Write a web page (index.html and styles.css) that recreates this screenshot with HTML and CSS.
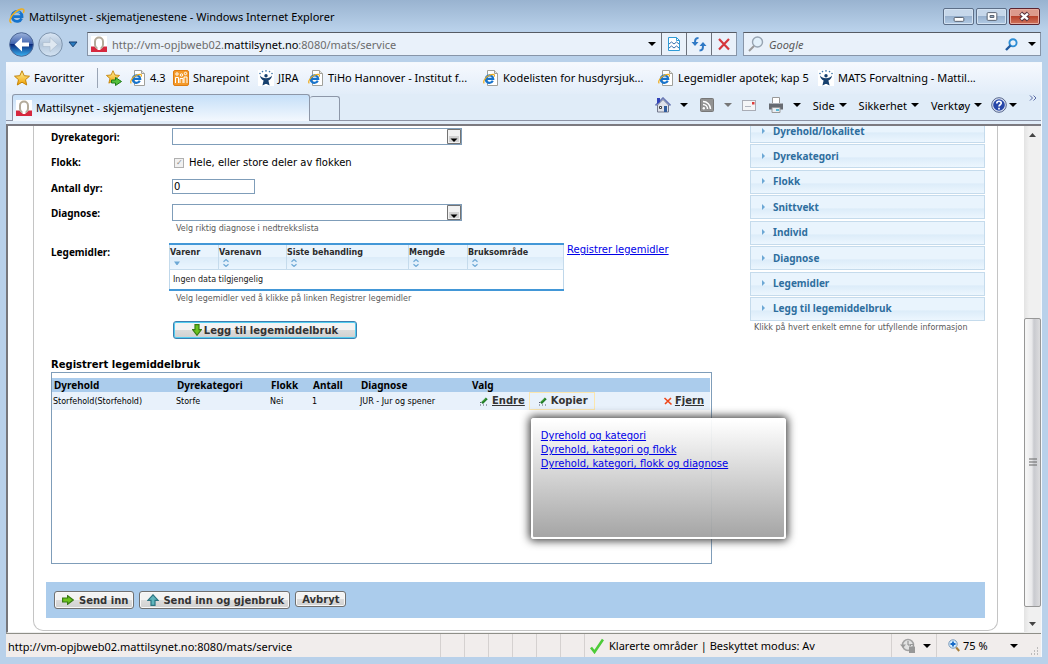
FILE: index.html
```html
<!DOCTYPE html>
<html lang="no">
<head>
<meta charset="utf-8">
<title>Mattilsynet - skjematjenestene</title>
<link rel="stylesheet" href="styles.css">
</head>
<body>
<svg class="sprite" aria-hidden="true">
  <defs>
    <linearGradient id="gold" x1="0" y1="0" x2="0" y2="1"><stop offset="0" stop-color="#fff3a0"/><stop offset="1" stop-color="#f0a000"/></linearGradient>
    <linearGradient id="navy" x1="0" y1="0" x2="0" y2="1"><stop offset="0" stop-color="#9db4dc"/><stop offset=".48" stop-color="#3f62ae"/><stop offset=".5" stop-color="#0c2a7c"/><stop offset="1" stop-color="#38b4f4"/></linearGradient>
    <linearGradient id="pale" x1="0" y1="0" x2="0" y2="1"><stop offset="0" stop-color="#dbe7f4"/><stop offset=".5" stop-color="#b3c6db"/><stop offset="1" stop-color="#d5e4f3"/></linearGradient>
  </defs>
  <symbol id="ie" viewBox="0 0 16 16">
    <path d="M12.6 10.4A5 5 0 1 1 13 8.600H4.600" fill="none" stroke="#1673cc" stroke-width="2.800"/>
    <path d="M4.500 6.500a4.500 4.500 0 0 1 6.500-2" fill="none" stroke="#62c0f5" stroke-width="1.200"/>
    <path d="M2.500 14.800C-.8 14 1.500 8 6 4.300S15.500-.5 14.900 3.200c-.1.700-.4 1.300-.7 1.800" fill="none" stroke="#efae1d" stroke-width="1.500"/>
  </symbol>
  <symbol id="page" viewBox="0 0 16 16">
    <path d="M4.500.5h7l3 3v12h-10z" fill="#fff" stroke="#a0a09a"/><path d="M11.500.5v3h3" fill="#e4e4e0" stroke="#a0a09a"/>
    <path d="M9.800 10.800A3.700 3.700 0 1 1 10.200 8.800H3.500" fill="none" stroke="#1673cc" stroke-width="2.200"/>
    <path d="M1.300 13.400C-.4 12 2 7 6.500 5.200s5.700-.7 4.500 1.500" fill="none" stroke="#f0ad1d" stroke-width="1.200"/>
  </symbol>
  <symbol id="mt" viewBox="0 0 16 16">
    <path d="M0 0h16v16H0z" fill="#fff"/><path d="M0 10.500h3.500L6 13h4l2.500-2.500H16V16H0z" fill="#d6283e"/>
    <rect x="4" y="1.500" width="8" height="11" rx="4" fill="#fff" stroke="#b3aa9a" stroke-width="2"/>
    <path d="M6.500 11h3v3h-3z" fill="#fff"/>
  </symbol>
  <symbol id="star" viewBox="0 0 16 16"><path d="M8 .8l2.200 4.900 5.300.5-4 3.500 1.200 5.300L8 12.200 3.300 15l1.200-5.300-4-3.500 5.300-.5z" fill="url(#gold)" stroke="#c48409"/></symbol>
  <symbol id="jira" viewBox="0 0 16 16">
    <path d="M0 0h16v16H0z" fill="#fff"/><circle cx="8" cy="5.800" r="1.700" fill="#17406e"/>
    <path d="M2 5.500c1.500 2 3.200 2.700 6 2.700s4.500-.7 6-2.700c-.2 2.500-1.600 4-3.600 5l1.200 5-3-1.500H7.400l-3 1.500 1.200-5C3.600 9.500 2.200 8 2 5.500z" fill="#17406e"/>
    <g fill="#3973a8"><circle cx="2" cy="3.500" r=".8"/><circle cx="4.500" cy="1.600" r=".8"/><circle cx="8" cy=".9" r=".8"/><circle cx="11.500" cy="1.600" r=".8"/><circle cx="14" cy="3.500" r=".8"/></g>
  </symbol>
  <symbol id="caret" viewBox="0 0 8 4"><path d="M0 0h8L4 4z" fill="currentColor"/></symbol>
  <symbol id="pencil" viewBox="0 0 10 10"><path d="M3 7.200 7.800 2.400" stroke="#1f7a26" stroke-width="2.600"/><path d="M3.500 5.800 6.800 2.500" stroke="#62c24a" stroke-width=".8"/><path d="M1 6.500h1M1 9h1M4 9h1M7 9h1" stroke="#51566a"/></symbol>
  <symbol id="sort" viewBox="0 0 6 8"><path d="M.5 2.800 3 .6l2.500 2.200M.5 5.200 3 7.400l2.500-2.200" fill="none" stroke="#6da8d5" stroke-width="1.200"/></symbol>
  <symbol id="combo-btn" viewBox="0 0 14 15"><path d="M.5.5h13v14H.5z" fill="#f2f2f2" stroke="#737373"/><path d="M2 7h10v6H2z" fill="#d2d2d2"/><path d="M3.500 9.500h7L7 13z"/></symbol>
  <symbol id="arrow" viewBox="0 0 12 10"><path d="M.6 3h5V.7L11.300 5 5.600 9.300V7h-5z" fill="#6cc41d" stroke="#397b14" stroke-width="1.200"/></symbol>
</svg>

<div class="window">
  <header class="titlebar">
    <svg class="i16"><use href="#ie"/></svg>
    <span class="title">Mattilsynet - skjematjenestene - Windows Internet Explorer</span>
    <div class="window-buttons">
      <button class="winbtn" aria-label="Minimer"><svg viewBox="0 0 30 15"><rect x="10.500" y="8.500" width="10" height="4" rx="1" fill="#fff" stroke="#555d6b"/></svg></button>
      <button class="winbtn" aria-label="Maksimer"><svg viewBox="0 0 30 15"><rect x="10.500" y="3.500" width="10" height="8" rx="1" fill="#fff" stroke="#555d6b"/><path d="M13.500 6.500h4v2h-4z" fill="#9db3cc" stroke="#555d6b"/></svg></button>
      <button class="winbtn close" aria-label="Lukk"><svg viewBox="0 0 30 15"><path d="m11 4 8 7M19 4l-8 7" stroke="#56303a" stroke-width="4.500"/><path d="m11.500 4.500 7 6M18.500 4.500l-7 6" stroke="#fff" stroke-width="2.400"/></svg></button>
    </div>
  </header>

  <div class="navbar">
    <div class="history">
      <button aria-label="Tilbake"><svg viewBox="0 0 25 25"><circle cx="12.500" cy="12.500" r="11.800" fill="url(#navy)" stroke="#4c6795"/><path d="M13 5.500 5.500 12.500l7.500 7v-5h7v-4h-7z" fill="#fff"/></svg></button>
      <button aria-label="Fram"><svg viewBox="0 0 25 25"><circle cx="12.500" cy="12.500" r="11.800" fill="url(#pale)" stroke="#7e94ad"/><path d="m12 5.500 7.500 7-7.500 7v-5H5v-4h7z" fill="#dfe8f1" stroke="#a9b9ca" stroke-width=".6"/></svg></button>
      <button class="recent" aria-label="Nylige sider"><svg viewBox="0 0 10 7"><path d="M1 1h8L5 5.800z" fill="#2a7cc0" stroke="#173f70"/></svg></button>
    </div>
    <div class="address">
      <svg class="i16"><use href="#mt"/></svg>
      <span class="url">http://vm-opjbweb02.<b>mattilsynet.no</b>:8080/mats/service</span>
      <svg class="caret"><use href="#caret"/></svg>
      <button aria-label="Kompatibilitet"><svg viewBox="0 0 16 16"><path d="M2.500 1.500h8l3 3v10h-11z" fill="#fff" stroke="#2e9bd6"/><path d="M10.500 1.500v3h3" fill="none" stroke="#2e9bd6"/><path d="m3 8 2.500-2L8 8l2.500-2L13 8M3 12l2.500-2L8 12l2.500-2 2.500 2" fill="none" stroke="#3572b0"/></svg></button>
      <button aria-label="Oppdater"><svg viewBox="0 0 16 16"><path d="M7.500 2C4 2 4 4 4 8" fill="none" stroke="#2f79c5" stroke-width="2"/><path d="M.5 6h7L4 10zM8.500 10h7L12 6z" fill="#2f79c5"/><path d="M8.500 14.500c3.500 0 3.500-2 3.500-6" fill="none" stroke="#2f79c5" stroke-width="2"/></svg></button>
      <button aria-label="Stopp"><svg viewBox="0 0 16 16"><path d="m3 3 10 10.500M13 3 3 13.500" stroke="#d5363c" stroke-width="2.200"/></svg></button>
    </div>
    <div class="search">
      <svg class="i16" viewBox="0 0 16 16"><circle cx="9.500" cy="6" r="5" fill="#e3f1fb" stroke="#97a4b2" stroke-width="1.400"/><path d="m6 10-5 5" stroke="#9a9a9a" stroke-width="2"/></svg>
      <input type="text" placeholder="Google" aria-label="Google">
      <svg class="go" viewBox="0 0 13 13"><circle cx="8" cy="4.800" r="3.600" fill="none" stroke="#2d8ed5" stroke-width="1.900"/><path d="M5.500 7.500 1 12" stroke="#205a9f" stroke-width="2.400"/></svg>
      <svg class="caret"><use href="#caret"/></svg>
    </div>
  </div>

  <div class="frame">
    <nav class="favorites">
      <button class="fav first"><svg class="i16"><use href="#star"/></svg>Favoritter</button>
      <button class="fav" aria-label="Legg til"><svg class="i16" viewBox="0 0 16 16"><use href="#star" width="14" height="14"/><path d="M5.500 10h4V7.500l6 4-6 4V13h-4z" fill="#54c13b" stroke="#1f7a1a"/></svg></button>
      <a class="fav" href="#"><svg class="i16"><use href="#page"/></svg>4.3</a>
      <a class="fav" href="#"><svg class="i16" viewBox="0 0 16 16"><rect x=".5" y=".5" width="15" height="15" rx="1.500" fill="#f39a2b" stroke="#e07d10"/><g fill="none" stroke="#fff"><circle cx="4" cy="4" r="1.200"/><circle cx="8.500" cy="5" r="1.200"/><circle cx="12.500" cy="3.500" r="1.200"/><path d="M2.500 13V7.500h3V13M7 13V8.500h3V13M11 13V7h3v6"/></g></svg>Sharepoint</a>
      <a class="fav" href="#"><svg class="i16"><use href="#jira"/></svg>JIRA</a>
      <a class="fav" href="#"><svg class="i16"><use href="#page"/></svg>TiHo Hannover - Institut f...</a>
      <a class="fav" href="#"><svg class="i16"><use href="#page"/></svg>Kodelisten for husdyrsjuk...</a>
      <a class="fav" href="#"><svg class="i16"><use href="#page"/></svg>Legemidler apotek; kap 5</a>
      <a class="fav" href="#"><svg class="i16"><use href="#jira"/></svg>MATS Forvaltning - Mattil...</a>
    </nav>

    <div class="tabrow">
      <div class="tab"><svg class="i16"><use href="#mt"/></svg>Mattilsynet - skjematjenestene</div>
      <button class="newtab" aria-label="Ny fane"></button>
      <div class="commands">
        <button class="cmd" aria-label="Hjem"><svg class="i16" viewBox="0 0 16 16"><path d="M2.500 8 8 2.500 13.500 8v7h-11z" fill="#dfe2ea" stroke="#72788c"/><path d="M.5 8.500 8 1l7.500 7.500" fill="none" stroke="#6b79b5" stroke-width="1.600"/><path d="M2 1h3v4L2 7z" fill="#3142b8"/><path d="M9 9h3v6H9z" fill="#315c9d"/><path d="M4.500 9.500h2v2h-2z" fill="#fff" stroke="#444"/></svg><svg class="caret"><use href="#caret"/></svg></button>
        <button class="cmd feed" aria-label="Feeder"><svg class="i14" viewBox="0 0 14 14"><rect x=".5" y=".5" width="13" height="13" rx="1" fill="#929292" stroke="#777"/><circle cx="3.800" cy="10.200" r="1.200" fill="#fff"/><path d="M3 6.500A4.500 4.500 0 0 1 7.500 11M3 3.500a7.500 7.500 0 0 1 7.500 7.500" fill="none" stroke="#fff" stroke-width="1.500"/></svg><svg class="caret gray"><use href="#caret"/></svg></button>
        <button class="cmd mail" aria-label="Les e-post"><svg viewBox="0 0 14 11"><rect x=".5" y=".5" width="13" height="10" fill="#f4f5f7" stroke="#a9acb5"/><path d="M10 2h2.500v2.500H10z" fill="#dd3b3b"/><path d="M3 6.500h6" stroke="#b1b4be"/></svg></button>
        <button class="cmd" aria-label="Skriv ut"><svg class="i16" viewBox="0 0 16 16"><path d="M4.500.5h7v6h-7z" fill="#fff" stroke="#999"/><path d="M1 6.500h14v6H1z" fill="#676b72"/><path d="M2 6.500h12" stroke="#aeb2b8"/><path d="M4 10.500h8v5H4z" fill="#e9edf2" stroke="#999"/><path d="M8 12h3v2H8z" fill="#58b9d6"/></svg><svg class="caret"><use href="#caret"/></svg></button>
        <button class="cmd">Side<svg class="caret"><use href="#caret"/></svg></button>
        <button class="cmd">Sikkerhet<svg class="caret"><use href="#caret"/></svg></button>
        <button class="cmd">Verktøy<svg class="caret"><use href="#caret"/></svg></button>
        <button class="cmd help-menu" aria-label="Hjelp"><svg class="i16" viewBox="0 0 16 16"><circle cx="8" cy="8" r="7.300" fill="#dfe7f5" stroke="#55648b"/><circle cx="8" cy="8" r="5.800" fill="#2746a8"/><path d="M5.800 6.500c0-3 4.600-2.900 4.400-.3C10.100 7.800 8 7.800 8 9.600M8 10.800v1.700" fill="none" stroke="#fff" stroke-width="1.700"/></svg><svg class="caret"><use href="#caret"/></svg></button>
        <button class="more" aria-label="Mer"><svg viewBox="0 0 8 6"><path d="m1 .5 2.500 2.500L1 5.500M4.500.5 7 3 4.500 5.500" fill="none" stroke="#5a6aa5"/></svg></button>
      </div>
    </div>

    <div class="viewport">
      <main class="page">
        <div class="panel">
          <div class="columns">
            <form class="form">
              <div class="row">
                <label for="kategori">Dyrekategori:</label>
                <div class="combo"><select id="kategori"><option></option></select><svg><use href="#combo-btn"/></svg></div>
              </div>
              <div class="row check-row">
                <span class="label">Flokk:</span>
                <div class="check"><input type="checkbox" id="hele" checked disabled><label for="hele">Hele, eller store deler av flokken</label></div>
              </div>
              <div class="row">
                <label for="antall">Antall dyr:</label>
                <div><input class="number" type="text" id="antall" value="0"></div>
              </div>
              <div class="row">
                <label for="diagnose">Diagnose:</label>
                <div>
                  <div class="combo"><select id="diagnose"><option></option></select><svg><use href="#combo-btn"/></svg></div>
                  <p class="hint">Velg riktig diagnose i nedtrekkslista</p>
                </div>
              </div>
              <div class="row meds-row">
                <span class="label">Legemidler:</span>
                <div class="meds-cell">
                  <div class="meds-line">
                    <table class="meds">
                      <colgroup><col class="m1"><col class="m2"><col class="m3"><col class="m4"><col class="m5"></colgroup>
                      <thead><tr>
                        <th>Varenr<svg viewBox="0 0 6 8"><path d="M0 2.500h6L3.500 6h-1z" fill="#6da8d5"/></svg></th>
                        <th>Varenavn<svg><use href="#sort"/></svg></th>
                        <th>Siste behandling<svg><use href="#sort"/></svg></th>
                        <th>Mengde<svg><use href="#sort"/></svg></th>
                        <th>Bruksområde<svg><use href="#sort"/></svg></th>
                      </tr></thead>
                      <tbody><tr><td colspan="5">Ingen data tilgjengelig</td></tr></tbody>
                    </table>
                    <a class="link" href="#">Registrer legemidler</a>
                  </div>
                  <p class="hint">Velg legemidler ved å klikke på linken Registrer legemidler</p>
                  <button type="button" class="btn add"><svg class="down" viewBox="0 0 10 12"><path d="M3 .6h4v5h2.400L5 11.300.6 5.600H3z" fill="#69c21f" stroke="#3a7d14" stroke-width="1.200"/></svg>Legg til legemiddelbruk</button>
                </div>
              </div>
            </form>

            <aside class="help">
              <div class="accordion">
                <button>Dyrehold/lokalitet</button>
                <button>Dyrekategori</button>
                <button>Flokk</button>
                <button>Snittvekt</button>
                <button>Individ</button>
                <button>Diagnose</button>
                <button>Legemidler</button>
                <button>Legg til legemiddelbruk</button>
              </div>
              <p class="hint">Klikk på hvert enkelt emne for utfyllende informasjon</p>
            </aside>
          </div>

          <section class="registered">
            <h2>Registrert legemiddelbruk</h2>
            <div class="box">
              <table class="uses">
                <colgroup><col class="u1"><col class="u2"><col class="u3"><col class="u4"><col class="u5"><col></colgroup>
                <thead><tr><th>Dyrehold</th><th>Dyrekategori</th><th>Flokk</th><th>Antall</th><th>Diagnose</th><th>Valg</th></tr></thead>
                <tbody><tr>
                  <td>Storfehold(Storfehold)</td><td>Storfe</td><td>Nei</td><td>1</td><td>JUR - Jur og spener</td>
                  <td class="actions"><div class="action-list">
                    <a class="action" href="#"><svg><use href="#pencil"/></svg><span>Endre</span></a>
                    <div class="copy">
                      <a class="action current" href="#"><svg><use href="#pencil"/></svg><span>Kopier</span></a>
                      <div class="popup">
                        <a href="#">Dyrehold og kategori</a>
                        <a href="#">Dyrehold, kategori og flokk</a>
                        <a href="#">Dyrehold, kategori, flokk og diagnose</a>
                      </div>
                    </div>
                    <a class="action remove" href="#"><svg viewBox="0 0 10 10"><path d="m1.500 2 7 6.500M8 2 2 8" stroke="#ee4619" stroke-width="1.600"/></svg><span>Fjern</span></a>
                  </div></td>
                </tr></tbody>
              </table>
            </div>
          </section>

          <div class="submit-bar">
            <button class="btn"><svg class="right"><use href="#arrow"/></svg>Send inn</button>
            <button class="btn"><svg class="up" viewBox="0 0 12 12"><path d="M4 11.400v-5H.8L6 .8l5.200 5.600H8v5z" fill="#5fb5bd" stroke="#2b7482" stroke-width="1.200"/></svg>Send inn og gjenbruk</button>
            <button class="btn plain">Avbryt</button>
          </div>
        </div>
      </main>

      <div class="scrollbar" aria-hidden="true">
        <span class="step"><svg viewBox="0 0 7 4"><path d="M3.500 0 7 4H0z" fill="#444"/></svg></span>
        <span class="track-top"></span>
        <span class="thumb"><svg viewBox="0 0 8 8"><path d="M0 1h8M0 4h8M0 7h8" stroke="#666"/></svg></span>
        <span class="track-bottom"></span>
        <span class="step"><svg viewBox="0 0 7 4"><path d="M0 0h7L3.500 4z" fill="#444"/></svg></span>
      </div>
    </div>

    <footer class="status">
      <span class="status-url">http://vm-opjbweb02.mattilsynet.no:8080/mats/service</span>
      <i></i><i></i><i></i><i></i><i></i><i></i>
      <span class="zone"><svg viewBox="0 0 14 16"><path d="M1 9.500 4.500 14 13 1.500" fill="none" stroke="#4ccb38" stroke-width="2.600"/></svg>Klarerte områder | Beskyttet modus: Av</span>
      <button class="filter" aria-label="InPrivate"><svg class="i16" viewBox="0 0 16 16"><circle cx="8" cy="7" r="5.500" fill="#e2e2e2" stroke="#a3a3a3" stroke-width="1.500"/><path d="M0 6.500h6L3 10z" fill="#999"/><path d="M8 3v4h3" stroke="#888" fill="none"/><path d="M9 8.500h6V15H9z" fill="#979797"/><path d="M10.500 8V6.500h3V8" fill="none" stroke="#979797"/></svg><svg class="caret"><use href="#caret"/></svg></button>
      <button class="zoom"><svg class="i12" viewBox="0 0 12 13"><circle cx="5" cy="5" r="4.200" fill="#d8eefc" stroke="#7697b9"/><path d="M5 2.500v5M2.500 5h5" stroke="#1769c7" stroke-width="1.800"/><path d="m8.200 8.500 3 3.500" stroke="#a77e3c" stroke-width="2"/></svg>75 %<svg class="caret"><use href="#caret"/></svg></button>
      <svg class="grip" viewBox="0 0 9 9"><path d="M7 1h1M7 4h1M7 7h1M4 4h1M4 7h1M1 7h1" stroke="#aaa" stroke-width="1.500"/></svg>
    </footer>
  </div>
</div>
</body>
</html>
```

FILE: styles.css
```css
* { box-sizing: border-box; }
body {
  margin: 0;
  font: 11px "Noto Sans", "Open Sans", sans-serif;
  color: #000;
}
button { font: inherit; color: inherit; border: 0; background: none; padding: 0; }
svg { flex: none; display: block; }
a { color: inherit; text-decoration: none; }
p, h2 { margin: 0; }
.sprite { position: absolute; width: 0; height: 0; }
.i16 { width: 16px; height: 16px; }
.i14 { width: 14px; height: 14px; }
.i12 { width: 12px; height: 13px; }
.caret { width: 8px; height: 4px; }
.gray { color: #777; }

.window {
  height: 100vh;
  display: flex;
  flex-direction: column;
  padding: 0 6px 7px;
  background: linear-gradient(#99b3d0, #b9d1ea 30px);
  overflow: hidden;
}

/* Title bar */
.titlebar {
  height: 32px;
  flex: none;
  display: flex;
  align-items: center;
  gap: 4px;
  padding: 0 0 0 3px;
}
.title { flex: 1; white-space: nowrap; }
.window-buttons { display: flex; gap: 2px; padding-right: 2px; }
.winbtn {
  width: 31px;
  height: 17px;
  border: 1px solid #5d6f88;
  border-radius: 2px;
  background: linear-gradient(#c6d7ea 45%, #98b1ce 50%, #b2cbe5);
  box-shadow: inset 0 0 0 1px #d3e2f2;
}
.winbtn svg { width: 29px; height: 15px; }
.close {
  border-color: #5c2430;
  background: linear-gradient(#dc9a8c 45%, #b8422b 50%, #d0745c);
  box-shadow: inset 0 0 0 1px #e7ada0;
}

/* Address and search */
.navbar {
  height: 30px;
  flex: none;
  display: flex;
  align-items: flex-start;
  padding: 0 1px 0 3px;
}
.history { display: flex; width: 78px; gap: 4px; align-items: center; }
.history svg { width: 25px; height: 25px; }
.recent { padding-left: 1px; }
.history .recent svg { width: 10px; height: 7px; }
.address, .search {
  height: 24px;
  display: flex;
  align-items: center;
  background: #e9f1fa;
  border: 1px solid #8795a8;
  border-top-color: #565b63;
}
.address { flex: 1; padding-left: 3px; margin-right: 6px; }
.url { flex: 1; padding-left: 5px; color: #6c6c6c; white-space: nowrap; overflow: hidden; }
.url b { font-weight: 400; color: #000; }
.address button {
  width: 25px;
  height: 22px;
  border-left: 1px solid #6c727c;
  display: grid;
  place-items: center;
}
.address button svg { width: 16px; height: 16px; }
.address .caret { margin-right: 5px; }
.search { width: 298px; padding: 0 4px; }
.search input {
  flex: 1;
  min-width: 0;
  border: 0;
  background: none;
  padding: 0 5px;
  font: italic 11px "Noto Sans", "Open Sans", sans-serif;
}
.search input::placeholder { color: #5a5a5a; opacity: 1; }
.go { width: 13px; height: 13px; margin-right: 10px; }

/* Frame */
.frame {
  flex: 1;
  min-height: 0;
  display: flex;
  flex-direction: column;
  background: #e0ecf8;
  border: 1px solid #f4f8fc;
  border-width: 1px 1px 0 0;
}
.favorites {
  height: 31px;
  flex: none;
  display: grid;
  grid-template-columns: 92px 24px 43px 85px 50px 175px 175px 160px 1fr;
  align-items: center;
  padding: 0 0 2px 8px;
  background: linear-gradient(#f6f9fe, #e2edf9);
}
.fav { display: flex; align-items: center; gap: 4px; white-space: nowrap; }
.first { border-right: 1px solid #9aa5b5; margin-right: 8px; height: 20px; }
.tabrow {
  height: 27px;
  flex: none;
  display: flex;
  align-items: flex-end;
  padding-left: 6px;
  border-bottom: 1px solid #8d93a5;
}
.tab {
  width: 298px;
  height: 27px;
  display: flex;
  align-items: center;
  gap: 4px;
  padding: 0 0 1px 3px;
  border: 1px solid #8d97a8;
  border-bottom: 0;
  border-radius: 3px 3px 0 0;
  background: linear-gradient(#c5dff8, #f3f8fe);
  margin-bottom: -1px;
}
.newtab { width: 30px; height: 24px; border: 1px solid #8d97a8; border-width: 1px 1px 0 0; border-radius: 3px 3px 0 0; }
.commands {
  flex: 1;
  height: 27px;
  display: flex;
  align-items: center;
  justify-content: flex-end;
  gap: 12px;
  padding-bottom: 3px;
}
.cmd { display: flex; align-items: center; gap: 4px; }
.cmd .i16 + .caret { margin-left: 5px; }
.feed { gap: 10px; }
.mail { margin-left: -2px; }
.mail svg { width: 14px; height: 11px; }
.cmd.help-menu .caret { margin-left: -2px; }
.help-menu { margin-left: -3px; }
.more { align-self: flex-start; padding: 2px 4px 0 0; }
.more svg { width: 8px; height: 6px; }

/* Page viewport */
.viewport {
  flex: 1;
  min-height: 0;
  display: flex;
  margin-top: 3px;
  border-top: 2px solid #7c7a80;
  border-left: 2px solid #77777b;
  border-bottom: 1px solid #eee;
  background: #fff;
  font-family: "DejaVu Sans", sans-serif;
  font-size: 10px;
}
.page { flex: 1; min-width: 0; overflow: hidden; padding: 0 26px 1px 25px; }
.panel {
  height: 100%;
  display: flex;
  flex-direction: column;
  border: 1px solid #c4c4c4;
  border-top: 0;
  border-radius: 0 0 10px 10px;
  padding: 0 12px 12px;
}
.columns { display: flex; justify-content: space-between; }
.form { padding: 2px 0 0 5px; }
.row { display: grid; grid-template-columns: 121px auto; margin-bottom: 6px; }
.row > label, .label { font: bold 10px/19px "Noto Sans", sans-serif; }
.combo { position: relative; width: 290px; height: 17px; }
.combo select {
  width: 100%;
  height: 17px;
  display: block;
  appearance: none;
  border: 1px solid #7f9db9;
  background: #fff;
}
.combo svg { position: absolute; right: 1px; top: 1px; width: 14px; height: 15px; pointer-events: none; }
.row.check-row { margin-bottom: 7px; }
.check { display: flex; align-items: center; gap: 5px; padding-left: 2px; }
.check input {
  appearance: none;
  width: 10px;
  height: 10px;
  margin: 0;
  border: 1px solid #b0b0b0;
  background: #f1f1f1;
  display: grid;
  place-items: center;
}
.check input::after { content: "✓"; color: #8a8a8a; font-size: 8px; line-height: 8px; }
.number {
  display: block;
  width: 83px;
  height: 15px;
  border: 1px solid #7f9db9;
  padding: 0 1px;
  font: 10px "DejaVu Sans", sans-serif;
}
.hint { font: 8px/10px "DejaVu Sans", sans-serif; color: #5a5a5a; }
.row .hint { padding: 3px 0 0 4px; }
.meds-row { padding-top: 3px; }
.meds-cell { margin-left: -3px; }
.meds-cell .hint { padding-left: 7px; }
.meds-line { display: flex; gap: 3px; }
.meds {
  width: 394px;
  table-layout: fixed;
  border-collapse: collapse;
  border: 1px solid #bfd7ea;
  border-top: 2px solid #4297d7;
  border-bottom: 2px solid #4297d7;
}
.m1 { width: 49px; } .m2 { width: 68px; } .m3 { width: 122px; } .m4 { width: 59px; } .m5 { width: 96px; }
.meds th {
  height: 25px;
  padding: 3px 0 0;
  border: 1px solid #c5dbec;
  border-top-width: 0;
  background: linear-gradient(#e9f4fd 50%, #dcecf9 52%, #eaf5fe);
  color: #2b2b2b;
  text-align: left;
  vertical-align: top;
  font: bold 8px/10px "DejaVu Sans", sans-serif;
}
.meds th svg { width: 6px; height: 8px; margin: 1px 0 0 4px; }
.meds td { height: 21px; padding: 0 3px; font-size: 8px; color: #222; }
.link { color: #0000e8; text-decoration: underline; line-height: 12px; padding-top: 1px; }
.btn {
  height: 18px;
  display: flex;
  align-items: center;
  justify-content: center;
  border: 1px solid #707070;
  border-radius: 3px;
  background: linear-gradient(#f3f3f3 48%, #dcdcdc 50%, #d0d0d0);
  box-shadow: inset 0 0 0 1px #f8f8f8;
  color: #333;
  font: bold 10px "DejaVu Sans", sans-serif;
  white-space: nowrap;
}
.add {
  width: 184px;
  margin: 17px 0 0 4px;
  border-color: #3c7fb1;
  box-shadow: inset 0 0 0 1px #53cdf0;
}
.down { width: 10px; height: 12px; margin-right: 2px; }

/* Help accordion */
.help { width: 235px; margin-top: -7px; }
.accordion { height: 202px; display: grid; align-content: space-between; }
.accordion button {
  height: 24px;
  display: flex;
  align-items: center;
  gap: 8px;
  padding: 0 0 1px 11px;
  border: 1px solid #c5dbec;
  background: linear-gradient(#e9f4fd 55%, #dcecf9 58%, #ecf6fe);
  color: #2e6e9e;
  font: bold 10px "Noto Sans", sans-serif;
}
.accordion button::before { content: ""; border: solid transparent; border-width: 3px 0 3px 3px; border-left-color: #6da8d5; }
.help .hint { padding: 2px 0 0 4px; }

/* Registered uses */
.registered { flex: 1; min-height: 0; display: flex; flex-direction: column; padding-left: 5px; margin-top: 13px; }
.registered h2 { font: bold 10px/14px "DejaVu Sans", sans-serif; }
.box { flex: 1; width: 661px; border: 1px solid #7f9db9; padding: 5px 1px 0 0; }
.uses { width: 100%; table-layout: fixed; border-collapse: collapse; }
.u1 { width: 123px; } .u2 { width: 94px; } .u3 { width: 42px; } .u4 { width: 48px; } .u5 { width: 111px; }
.uses th {
  height: 14px;
  padding: 0 0 0 2px;
  background: #abccec;
  text-align: left;
  font: bold 10px/14px "Noto Sans", sans-serif;
}
.uses td { height: 18px; padding: 0 0 0 1px; background: #e8f1fb; font-size: 8px; white-space: nowrap; }
.action-list { display: flex; align-items: center; padding: 0 6px 0 8px; }
.action { display: flex; align-items: center; gap: 3px; font: bold 10px/16px "DejaVu Sans", sans-serif; color: #333; }
.action svg { width: 10px; height: 10px; }
.action span { text-decoration: underline; }
.copy { position: relative; margin-left: 4px; }
.current { border: 1px solid #fbe6ae; padding: 0 6px 0 8px; }
.current span { text-decoration: none; }
.remove { margin-left: auto; gap: 2px; }
.popup {
  position: absolute;
  left: 2px;
  top: 26px;
  width: 255px;
  height: 121px;
  padding: 9px 8px;
  display: flex;
  flex-direction: column;
  align-items: flex-start;
  border: 2px solid #fff;
  border-radius: 3px;
  background: linear-gradient(rgba(255, 255, 255, .95), rgba(160, 160, 160, .95));
  box-shadow: 0 0 8px 2px #444;
  font: 10px/14px "DejaVu Sans", sans-serif;
}
.popup a { color: #0000e8; text-decoration: underline; }

.submit-bar {
  height: 36px;
  flex: none;
  display: flex;
  align-items: flex-start;
  gap: 5px;
  margin-top: 18px;
  padding: 9px 8px;
  background: #abccec;
}
.submit-bar .btn { padding: 0 5px 0 7px; }
.submit-bar .plain { height: 16px; padding: 0 6px; }
.right { width: 12px; height: 10px; margin-right: 5px; }
.up { width: 12px; height: 12px; margin-right: 4px; }

/* Scrollbar */
.scrollbar { width: 17px; display: flex; flex-direction: column; background: linear-gradient(90deg, #e3e3e3, #f0f0f0 30%, #f0f0f0); }
.step { height: 17px; display: grid; place-items: center; }
.step svg { width: 7px; height: 4px; }
.track-top { flex: 176; }
.track-bottom { flex: 8; }
.thumb {
  flex: 289;
  display: grid;
  place-items: center;
  border: 1px solid #979797;
  border-radius: 2px;
  background: linear-gradient(90deg, #f5f5f5 10%, #e9e9eb 45%, #c9cacf 60%, #dcdcde);
}
.thumb svg { width: 8px; height: 8px; }

/* Status bar */
.status {
  height: 24px;
  flex: none;
  display: flex;
  align-items: stretch;
  border-top: 1px solid #8f8f88;
  background: #f1edec;
  line-height: 24px;
  white-space: nowrap;
}
.status i { width: 24px; border-left: 1px solid #d5d1d0; }
.status-url { width: 434px; padding: 1px 0 0 2px; }
.zone { flex: 1; display: flex; align-items: center; gap: 5px; padding: 1px 0 0 5px; border-left: 1px solid #d5d1d0; }
.zone svg { width: 14px; height: 16px; }
.filter, .zoom { display: flex; align-items: center; border-left: 1px solid #d5d1d0; }
.filter { width: 45px; gap: 7px; padding-left: 8px; }
.zoom { width: 86px; gap: 3px; padding-left: 11px; }
.zoom .caret { margin-left: auto; margin-right: 4px; }
.grip { width: 9px; height: 9px; align-self: flex-end; margin: 0 2px 1px 8px; }
```
